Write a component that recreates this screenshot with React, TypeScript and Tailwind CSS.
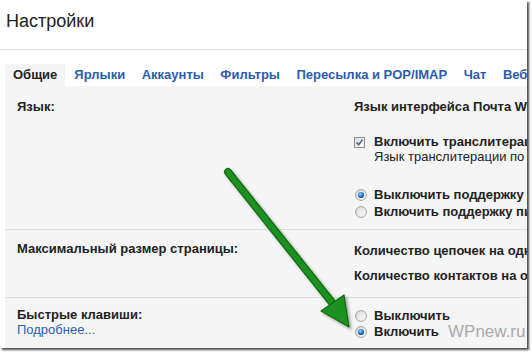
import React from "react";

const font = { fontFamily: '"Liberation Sans", Arial, sans-serif' };

function Radio({ checked }: { checked?: boolean }) {
  return (
    <svg width="12" height="12" viewBox="0 0 12 12" className="shrink-0">
      <defs>
        <linearGradient id="rg" x1="0" y1="0" x2="1" y2="1">
          <stop offset="0" stopColor="#d6d6d6" />
          <stop offset="1" stopColor="#ffffff" />
        </linearGradient>
        <radialGradient id="dot" cx="0.4" cy="0.35" r="0.7">
          <stop offset="0" stopColor="#9fd6ff" />
          <stop offset="0.5" stopColor="#2f86d6" />
          <stop offset="1" stopColor="#0c3f82" />
        </radialGradient>
      </defs>
      <circle cx="6" cy="6" r="5.4" fill="url(#rg)" stroke="#9a9a9a" strokeWidth="0.9" />
      {checked && <circle cx="6" cy="6" r="3.1" fill="url(#dot)" />}
    </svg>
  );
}

function Checkbox() {
  return (
    <svg width="11" height="11" viewBox="0 0 11 11" className="shrink-0">
      <defs>
        <linearGradient id="cg" x1="0" y1="0" x2="1" y2="1">
          <stop offset="0" stopColor="#dcdcdc" />
          <stop offset="1" stopColor="#ffffff" />
        </linearGradient>
      </defs>
      <rect x="0.5" y="0.5" width="10" height="10" fill="url(#cg)" stroke="#8e8f8f" />
      <path d="M2.6 5.4 L4.6 7.8 L8.4 2.6" fill="none" stroke="#4a5d94" strokeWidth="1.6" />
    </svg>
  );
}

export default function App() {
  const tabs = ["Ярлыки", "Аккаунты", "Фильтры", "Пересылка и POP/IMAP", "Чат", "Веб-клипы"];
  return (
    <div className="w-[532px] h-[354px] bg-white overflow-hidden" style={font}>
      <div className="relative w-[527px] h-[348px] bg-white overflow-hidden shadow-[2px_2px_2px_rgba(0,0,0,0.7)]">
        {/* Title */}
        <div className="h-[50px] border-b border-[#e3e3e3] pl-[6px] pt-[10px]">
          <div className="text-[18px] leading-[22px] text-[#222]">Настройки</div>
        </div>
        {/* Tabs */}
        <div className="flex pt-[14px] pl-[5px] h-[36px] whitespace-nowrap">
          <div className="h-[22px] px-[8px] mr-[1px] bg-[#f5f5f5] text-[13px] leading-[22px] font-bold text-[#222]">
            Общие
          </div>
          {tabs.map((t) => (
            <div key={t} className="h-[22px] px-[8px] mr-[0.5px] text-[13px] leading-[22px] font-bold text-[#2a5db0]">
              {t}
            </div>
          ))}
        </div>
        {/* Panel */}
        <div className="ml-[5px] h-[262px] bg-[#f5f5f5] text-[13px] text-[#222] whitespace-nowrap">
          {/* Row 1 */}
          <div className="grid grid-cols-[349px_1fr] h-[144px] border-b border-[#dddddd]">
            <div className="pl-[12px] pt-[13px] leading-[16px] font-bold">Язык:</div>
            <div className="pt-[13px]">
              <div className="leading-[16px] font-bold">Язык интерфейса Почта Windows Live:</div>
              <div className="flex items-start mt-[19px]">
                <div className="pt-[3px] mr-[9px]">
                  <Checkbox />
                </div>
                <div>
                  <div className="leading-[15px] font-bold">Включить транслитерацию</div>
                  <div className="leading-[15px]">Язык транслитерации по умолчанию:</div>
                </div>
              </div>
              <div className="mt-[22px] flex items-center h-[17px]">
                <div className="ml-[1px] mr-[7px]">
                  <Radio checked />
                </div>
                <span className="font-bold leading-[17px]">Выключить поддержку языков с письмом справа налево</span>
              </div>
              <div className="flex items-center h-[17px]">
                <div className="ml-[1px] mr-[7px]">
                  <Radio />
                </div>
                <span className="font-bold leading-[17px]">Включить поддержку письма справа налево</span>
              </div>
            </div>
          </div>
          {/* Row 2 */}
          <div className="grid grid-cols-[349px_1fr] h-[68px] border-b border-[#dddddd]">
            <div className="pl-[12px] pt-[11px] leading-[16px] font-bold">Максимальный размер страницы:</div>
            <div className="pt-[13px]">
              <div className="leading-[16px] font-bold">Количество цепочек на одной странице:</div>
              <div className="mt-[9px] leading-[16px] font-bold">Количество контактов на одной странице:</div>
            </div>
          </div>
          {/* Row 3 */}
          <div className="grid grid-cols-[349px_1fr]">
            <div className="pl-[12px] pt-[10px]">
              <div className="leading-[14px] font-bold">Быстрые клавиши:</div>
              <div className="leading-[16px] text-[#2a5db0]">Подробнее...</div>
            </div>
            <div className="pt-[10px]">
              <div className="flex items-center h-[16px]">
                <div className="ml-[1px] mr-[7px]">
                  <Radio />
                </div>
                <span className="font-bold leading-[16px]">Выключить</span>
              </div>
              <div className="flex items-center h-[16px]">
                <div className="ml-[1px] mr-[7px]">
                  <Radio checked />
                </div>
                <span className="font-bold leading-[16px]">Включить</span>
              </div>
            </div>
          </div>
        </div>

        {/* Watermark */}
        <div className="absolute left-[448px] top-[322px] text-[17px] leading-[20px] text-[#aaaaaa]">WPnew.ru</div>

        {/* Green arrow */}
        <svg className="absolute left-0 top-0 pointer-events-none" width="527" height="348">
          <defs>
            <filter id="sh" x="-20%" y="-20%" width="140%" height="140%">
              <feDropShadow dx="2" dy="2" stdDeviation="1.5" floodColor="#000" floodOpacity="0.35" />
            </filter>
          </defs>
          <g filter="url(#sh)">
            <line x1="228" y1="172" x2="334" y2="305" stroke="#0f6a10" strokeWidth="8" strokeLinecap="round" />
            <line x1="228" y1="172" x2="334" y2="305" stroke="#1f9122" strokeWidth="5.5" strokeLinecap="round" />
            <path d="M321 311 L344 295 L349 327 Z" fill="#1f9122" stroke="#0f6a10" strokeWidth="1.2" strokeLinejoin="round" />
          </g>
        </svg>
      </div>
    </div>
  );
}
